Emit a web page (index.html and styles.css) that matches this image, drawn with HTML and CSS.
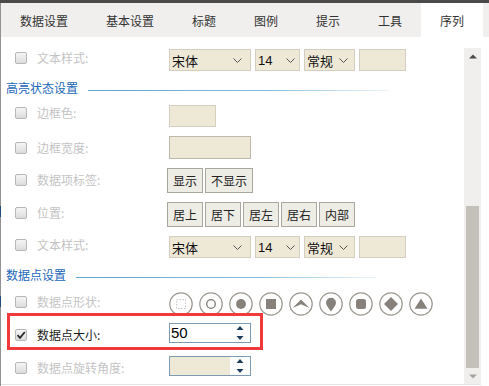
FILE: index.html
```html
<!DOCTYPE html>
<html lang="zh-CN">
<head>
    <meta charset="UTF-8">
    <title>序列设置</title>
    <link rel="stylesheet" href="styles.css">
</head>
<body>
    <div class="win">
        <div class="topbar"></div>
        <div class="frame">
            <div class="edge"></div>
            <div class="main">
                <ul class="tabs">
                    <li>数据设置</li>
                    <li>基本设置</li>
                    <li>标题</li>
                    <li>图例</li>
                    <li>提示</li>
                    <li>工具</li>
                    <li class="active">序列</li>
                </ul>

                <div class="panel">
                    <div class="form">
                        <div class="row">
                            <div class="lead u5"><span class="check"></span><span class="label">文本样式:</span></div>
                            <div class="ctrls">
                                <div class="sel w81">宋体<svg width="9" height="5"><polyline points="0.5,0.5 4.5,4.5 8.5,0.5"/></svg></div>
                                <div class="sel w45">14<svg width="9" height="5"><polyline points="0.5,0.5 4.5,4.5 8.5,0.5"/></svg></div>
                                <div class="sel w51">常规<svg width="9" height="5"><polyline points="0.5,0.5 4.5,4.5 8.5,0.5"/></svg></div>
                                <div class="swatch"></div>
                            </div>
                        </div>

                        <div class="group">高亮状态设置<span class="rule"></span></div>

                        <div class="row">
                            <div class="lead u6"><span class="check"></span><span class="label">边框色:</span></div>
                            <div class="swatch"></div>
                        </div>

                        <div class="row">
                            <div class="lead"><span class="check"></span><span class="label">边框宽度:</span></div>
                            <div class="field"></div>
                        </div>

                        <div class="row">
                            <div class="lead u2"><span class="check"></span><span class="label">数据项标签:</span></div>
                            <div class="btns">
                                <span class="btn">显示</span>
                                <span class="btn">不显示</span>
                            </div>
                        </div>

                        <div class="row">
                            <div class="lead u4"><span class="check"></span><span class="label">位置:</span></div>
                            <div class="btns">
                                <span class="btn">居上</span>
                                <span class="btn">居下</span>
                                <span class="btn">居左</span>
                                <span class="btn">居右</span>
                                <span class="btn">内部</span>
                            </div>
                        </div>

                        <div class="row">
                            <div class="lead u4"><span class="check"></span><span class="label">文本样式:</span></div>
                            <div class="ctrls">
                                <div class="sel w81">宋体<svg width="9" height="5"><polyline points="0.5,0.5 4.5,4.5 8.5,0.5"/></svg></div>
                                <div class="sel w45">14<svg width="9" height="5"><polyline points="0.5,0.5 4.5,4.5 8.5,0.5"/></svg></div>
                                <div class="sel w51">常规<svg width="9" height="5"><polyline points="0.5,0.5 4.5,4.5 8.5,0.5"/></svg></div>
                                <div class="swatch"></div>
                            </div>
                        </div>

                        <div class="group">数据点设置<span class="rule"></span></div>

                        <div class="row shapes-row">
                            <div class="lead u4"><span class="check"></span><span class="label">数据点形状:</span></div>
                            <div class="shapes">
                                <svg viewBox="0 0 24 24"><circle class="ring" cx="12" cy="12" r="11.2"/><rect class="dash" x="7.5" y="7.5" width="9" height="9"/></svg>
                                <svg viewBox="0 0 24 24"><circle class="ring" cx="12" cy="12" r="11.2"/><circle class="hollow" cx="12" cy="12" r="4.3"/></svg>
                                <svg viewBox="0 0 24 24"><circle class="ring" cx="12" cy="12" r="11.2"/><circle class="ico" cx="12" cy="12" r="4.9"/></svg>
                                <svg viewBox="0 0 24 24"><circle class="ring" cx="12" cy="12" r="11.2"/><rect class="ico" x="7" y="7" width="10" height="10"/></svg>
                                <svg viewBox="0 0 24 24"><circle class="ring" cx="12" cy="12" r="11.2"/><polygon class="ico" points="3.5,16 12,7.5 20.5,16 12,12.2"/></svg>
                                <svg viewBox="0 0 24 24"><circle class="ring" cx="12" cy="12" r="11.2"/><path class="ico" d="M12 19.5C9.5 16 7 13.6 7 10.8A5 5 0 0 1 17 10.8C17 13.6 14.5 16 12 19.5Z"/></svg>
                                <svg viewBox="0 0 24 24"><circle class="ring" cx="12" cy="12" r="11.2"/><rect class="ico" x="7" y="7" width="10" height="10" rx="2.5"/></svg>
                                <svg viewBox="0 0 24 24"><circle class="ring" cx="12" cy="12" r="11.2"/><polygon class="ico" points="12,5 19,12 12,19 5,12"/></svg>
                                <svg viewBox="0 0 24 24"><circle class="ring" cx="12" cy="12" r="11.2"/><polygon class="ico" points="12,6.5 18.5,16.8 5.5,16.8"/></svg>
                            </div>
                        </div>

                        <div class="row size-row mark">
                            <div class="lead d3"><span class="check on"><svg width="10" height="10"><path d="M1.5 5.2L4 7.8L8.8 2"/></svg></span><span class="label on">数据点大小:</span></div>
                            <div class="spin">
                                <span class="val">50</span>
                                <span class="arrows"><svg width="8" height="14"><polygon points="0.5,4 4,0 7.5,4"/><polygon points="0.5,10 4,14 7.5,10"/></svg></span>
                            </div>
                        </div>

                        <div class="row last-row">
                            <div class="lead d4"><span class="check"></span><span class="label">数据点旋转角度:</span></div>
                            <div class="spin off">
                                <span class="val"></span>
                                <span class="arrows"><svg width="8" height="14"><polygon points="0.5,4 4,0 7.5,4"/><polygon points="0.5,10 4,14 7.5,10"/></svg></span>
                            </div>
                        </div>
                    </div>

                    <div class="scrollbar">
                        <div class="sb-btn"><svg width="8" height="5"><polygon class="dark" points="0,4.5 4,0.5 8,4.5"/></svg></div>
                        <div class="sb-space"></div>
                        <div class="sb-thumb"></div>
                        <div class="sb-btn"><svg width="8" height="5"><polygon class="light" points="0,0.5 4,4.5 8,0.5"/></svg></div>
                    </div>
                </div>
            </div>
        </div>
    </div>
</body>
</html>
```

FILE: styles.css
```css
html, body {
    margin: 0;
    padding: 0;
    background: #fff;
}
body {
    font-family: "Noto Sans CJK SC", "Liberation Sans", sans-serif;
    font-size: 12px;
    color: #222;
}
.win {
    width: 489px;
    height: 386px;
    overflow: hidden;
}
.topbar {
    height: 3px;
    background: #4a4a4a;
}
.frame {
    display: flex;
    height: 383px;
}
.edge {
    width: 1px;
    flex: none;
    background: linear-gradient(to bottom, #929292 0, #929292 203px, #1f4c78 203px, #1f4c78 214px, #929292 214px, #929292 293px, #1f4c78 293px, #1f4c78 304px, #929292 304px);
}
.main {
    flex: 1;
}

/* tabs */
.tabs {
    display: flex;
    margin: 0;
    padding: 0;
    list-style: none;
    height: 34px;
    background: #f0efed;
}
.tabs li {
    padding: 0 19px;
    line-height: 35px;
    font-size: 12px;
    color: #333;
}
.tabs li.active {
    background: #fff;
}

/* panel */
.panel {
    display: flex;
    height: 347px;
    margin-right: 8px;
    border-bottom: 1px solid #e4e4e4;
}
.form {
    flex: 1;
    padding-top: 7px;
}
.row {
    display: flex;
    align-items: center;
    padding: 5px 0 4px;
    position: relative;
}
.lead {
    display: flex;
    align-items: center;
    width: 168px;
    height: 14px;
    flex: none;
}
.u2 { margin-top: -2px; }
.u4 { margin-top: -4px; }
.u5 { margin-top: -5px; }
.u6 { margin-top: -6px; }
.d3 { margin-bottom: -3px; }
.d4 { margin-bottom: -4px; }

.check {
    width: 12px;
    height: 12px;
    box-sizing: border-box;
    margin: 0 10px 0 14px;
    border: 1px solid #b7b7b7;
    border-radius: 2px;
    background: linear-gradient(#f5f5f5, #dcdcdc);
    display: flex;
    align-items: center;
    justify-content: center;
}
.check svg path {
    fill: none;
    stroke: #2a2a2a;
    stroke-width: 1.8;
}
.label {
    color: #c4c4c4;
    line-height: 14px;
    white-space: nowrap;
}
.label.on {
    color: #1c1c1c;
}

/* section headers */
.group {
    display: flex;
    align-items: center;
    height: 25px;
    padding-left: 5px;
    color: #1b67b8;
    font-size: 12px;
}
.group .rule {
    width: 300px;
    height: 1px;
    margin: 5px 0 0 10px;
    background: linear-gradient(to right, #5ca3cf, #86bddd 60%, #ecf4fa);
}

/* controls */
.ctrls {
    display: flex;
    gap: 4px;
}
.sel {
    display: flex;
    align-items: center;
    justify-content: space-between;
    box-sizing: border-box;
    height: 22px;
    padding: 0 6px 0 2px;
    border: 1px solid #d3cebf;
    background: #eee8d7;
    font-family: "Liberation Sans", "Noto Sans CJK SC", sans-serif;
    font-size: 13px;
    color: #111;
}
.sel svg polyline {
    fill: none;
    stroke: #555;
    stroke-width: 1;
}
.w81 { width: 82px; padding-right: 8px; }
.w45 { width: 45px; padding-right: 4px; }
.w51 { width: 51px; }
.swatch {
    width: 47px;
    height: 22px;
    box-sizing: border-box;
    border: 1px solid #d3cebf;
    background: #eee8d7;
}
.field {
    width: 82px;
    height: 23px;
    box-sizing: border-box;
    border: 1px solid #bcb8ac;
    background: #eee8d7;
}
.btns {
    display: flex;
    gap: 2px;
    margin-left: -2px;
}
.btn {
    display: flex;
    align-items: center;
    height: 25px;
    box-sizing: border-box;
    padding: 0 5px;
    border: 1px solid #a9a69d;
    background: #edece5;
    color: #222;
}

/* shapes */
.shapes-row {
    padding-bottom: 2px;
}
.shapes {
    display: flex;
    gap: 6px;
}
.shapes svg {
    width: 24px;
    height: 24px;
}
.shapes .ring {
    fill: #fff;
    stroke: #9a958e;
    stroke-width: 1.2;
}
.shapes .ico {
    fill: #86827b;
}
.shapes .hollow {
    fill: none;
    stroke: #7c7872;
    stroke-width: 1.3;
}
.shapes .dash {
    fill: none;
    stroke: #c9c9c9;
    stroke-width: 1;
    stroke-dasharray: 1.5 1.5;
}

/* spinners */
.size-row {
    padding-bottom: 7px;
}
.last-row {
    padding-top: 6px;
}
.spin {
    display: flex;
    width: 82px;
    height: 20px;
    box-sizing: border-box;
    border: 1px solid #7c9bb3;
    background: #fff;
}
.spin .val {
    flex: 1;
    padding-left: 1px;
    font-family: "Liberation Sans", sans-serif;
    font-size: 15px;
    line-height: 18px;
    color: #000;
}
.spin.off .val {
    background: #eee8d7;
}
.spin .arrows {
    width: 20px;
    display: flex;
    align-items: center;
    justify-content: center;
}
.spin .arrows polygon {
    fill: #1e3c5c;
}
.mark::after {
    content: "";
    position: absolute;
    left: 6px;
    top: -5px;
    bottom: 0;
    width: 256px;
    box-sizing: border-box;
    border: 3px solid #f23a3c;
}

/* scrollbar */
.scrollbar {
    width: 17px;
    flex: none;
    margin-top: 11px;
    display: flex;
    flex-direction: column;
    background: #f0efed;
}
.sb-btn {
    height: 16px;
    display: flex;
    align-items: center;
    justify-content: center;
}
.sb-btn .dark { fill: #4a4a4a; }
.sb-btn .light { fill: #a8a49e; }
.sb-space {
    flex: 1;
}
.sb-thumb {
    height: 162px;
    margin: 0 2px;
    background: #c4c1ba;
}
```
